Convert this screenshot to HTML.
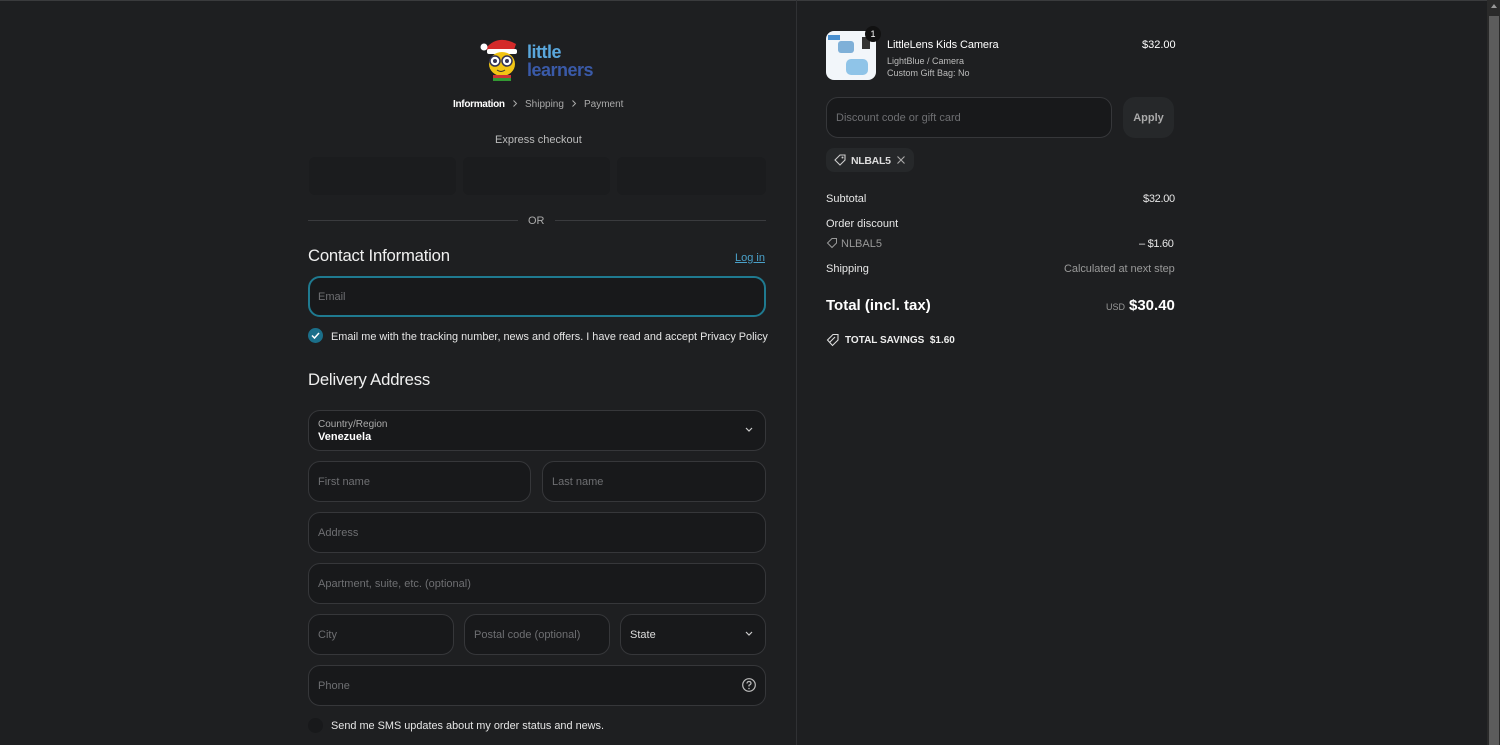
<!DOCTYPE html>
<html><head><meta charset="utf-8"><style>
*{box-sizing:border-box;margin:0;padding:0}
body{width:1500px;height:745px;overflow:hidden;background:#1e1f21;font-family:"Liberation Sans",sans-serif;color:#e8e8e8;position:relative}
.a{position:absolute}
.inp{position:absolute;border:1px solid #36373a;border-radius:12px;background:#18191b;font-size:11px;color:#6e6f72;padding-left:9px;padding-top:1px;display:flex;align-items:center}
.t{font-size:11px;color:#e6e6e6}
</style></head><body>
<div class="a" style="left:0;top:0;width:1500px;height:1px;background:#3a3b3d"></div>
<div class="a" style="left:796px;top:0;width:1px;height:745px;background:#303134"></div>
<div class="a" style="left:1487px;top:0;width:13px;height:745px;background:#2a2a2a"></div>
<div class="a" style="left:1489px;top:16px;width:10px;height:729px;background:#5c5c5c"></div>
<div class="a" style="left:1491px;top:4px;width:0;height:0;border-left:3px solid transparent;border-right:3px solid transparent;border-bottom:4px solid #999"></div>

<svg class="a" style="left:478px;top:34px" width="50" height="50" viewBox="0 0 50 50">
<path d="M8 14 Q20 0 38 10 L36 16 L10 18Z" fill="#d42a2a"/>
<circle cx="6" cy="13" r="3.5" fill="#fff"/>
<rect x="9" y="15" width="30" height="5" rx="2" fill="#fff"/>
<ellipse cx="24" cy="30" rx="13" ry="12" fill="#f2c514"/>
<circle cx="17" cy="27" r="5" fill="#fff" stroke="#335" stroke-width="1.5"/>
<circle cx="29" cy="27" r="5" fill="#fff" stroke="#335" stroke-width="1.5"/>
<circle cx="17" cy="27" r="2" fill="#335"/><circle cx="29" cy="27" r="2" fill="#335"/>
<path d="M19 36 Q23 39 27 36" stroke="#333" fill="none"/>
<rect x="15" y="41" width="18" height="3" fill="#c33"/><rect x="15" y="44" width="18" height="3" fill="#393"/>
</svg>
<div class="a" style="left:527px;top:42px;font-size:18px;font-weight:bold;color:#5aa7dc;letter-spacing:-0.5px">little</div>
<div class="a" style="left:527px;top:60px;font-size:18px;font-weight:bold;color:#3a5aa8;letter-spacing:-0.5px">learners</div>

<div class="a" style="left:453px;top:99px;font-size:10px;color:#fff;font-weight:bold;letter-spacing:-0.3px">Information</div>
<svg class="a" style="left:511px;top:99px" width="8" height="9"><path d="M2.5 1.5 L5.5 4.5 L2.5 7.5" stroke="#aaa" fill="none"/></svg>
<div class="a" style="left:525px;top:99px;font-size:10px;color:#aaa">Shipping</div>
<svg class="a" style="left:570px;top:99px" width="8" height="9"><path d="M2.5 1.5 L5.5 4.5 L2.5 7.5" stroke="#aaa" fill="none"/></svg>
<div class="a" style="left:584px;top:99px;font-size:10px;color:#aaa">Payment</div>
<div class="a" style="left:495px;top:134px;font-size:11px;color:#bbb">Express checkout</div>
<div class="a" style="left:309px;top:157px;width:147px;height:38px;border-radius:6px;background:#1b1c1e"></div>
<div class="a" style="left:463px;top:157px;width:147px;height:38px;border-radius:6px;background:#1b1c1e"></div>
<div class="a" style="left:617px;top:157px;width:149px;height:38px;border-radius:6px;background:#1b1c1e"></div>
<div class="a" style="left:308px;top:220px;width:210px;height:1px;background:#3a3b3e"></div>
<div class="a" style="left:555px;top:220px;width:211px;height:1px;background:#3a3b3e"></div>
<div class="a" style="left:528px;top:215px;font-size:11px;color:#aaa">OR</div>

<div class="a" style="left:308px;top:246px;font-size:16.7px;color:#f0f0f0;letter-spacing:-0.2px">Contact Information</div>
<div class="a" style="left:735px;top:252px;font-size:11px;color:#4aa0c8;text-decoration:underline">Log in</div>
<div class="inp" style="left:308px;top:276px;width:458px;height:41px;border:2px solid #1f7a90;padding-left:8px">Email</div>
<div class="a" style="left:308px;top:328px;width:15px;height:15px;border-radius:50%;background:#1b6f8a"></div>
<svg class="a" style="left:308px;top:328px" width="15" height="15"><path d="M4 7.5 L6.5 10 L11 5" stroke="#fff" stroke-width="1.5" fill="none"/></svg>
<div class="a t" style="left:331px;top:331px;font-size:10.9px">Email me with the tracking number, news and offers. I have read and accept Privacy Policy</div>

<div class="a" style="left:308px;top:370px;font-size:16.7px;color:#f0f0f0;letter-spacing:-0.2px">Delivery Address</div>
<div class="inp" style="left:308px;top:410px;width:458px;height:41px;display:block;padding-top:8px">
<div style="font-size:10px;color:#aaa">Country/Region</div><div style="font-size:11px;color:#fff;font-weight:bold;margin-top:1px">Venezuela</div></div>
<svg class="a" style="left:744px;top:426px" width="10" height="8"><path d="M2 2 L5 5 L8 2" stroke="#ccc" stroke-width="1.2" fill="none"/></svg>
<div class="inp" style="left:308px;top:461px;width:223px;height:41px">First name</div>
<div class="inp" style="left:542px;top:461px;width:224px;height:41px">Last name</div>
<div class="inp" style="left:308px;top:512px;width:458px;height:41px">Address</div>
<div class="inp" style="left:308px;top:563px;width:458px;height:41px">Apartment, suite, etc. (optional)</div>
<div class="inp" style="left:308px;top:614px;width:146px;height:41px">City</div>
<div class="inp" style="left:464px;top:614px;width:146px;height:41px">Postal code (optional)</div>
<div class="inp" style="left:620px;top:614px;width:146px;height:41px;color:#ddd">State</div>
<svg class="a" style="left:744px;top:630px" width="10" height="8"><path d="M2 2 L5 5 L8 2" stroke="#ccc" stroke-width="1.2" fill="none"/></svg>
<div class="inp" style="left:308px;top:665px;width:458px;height:41px">Phone</div>
<svg class="a" style="left:741px;top:677px" width="16" height="16"><circle cx="8" cy="8" r="6.3" stroke="#bbb" stroke-width="1.2" fill="none"/><path d="M6 6.5 Q6 4.5 8 4.5 Q10 4.5 10 6.3 Q10 7.5 8 8.3 L8 9.5" stroke="#bbb" stroke-width="1.2" fill="none"/><circle cx="8" cy="11.5" r="0.8" fill="#bbb"/></svg>
<div class="a" style="left:308px;top:718px;width:15px;height:15px;border-radius:50%;background:#18191b"></div>
<div class="a t" style="left:331px;top:720px;font-size:10.9px">Send me SMS updates about my order status and news.</div>

<div class="a" style="left:826px;top:31px;width:50px;height:49px;border-radius:8px;background:#f2f6fa;overflow:hidden">
<div class="a" style="left:20px;top:28px;width:22px;height:16px;border-radius:5px;background:#8fc4e8"></div>
<div class="a" style="left:12px;top:10px;width:16px;height:12px;border-radius:3px;background:#7fb0d8"></div>
<div class="a" style="left:2px;top:4px;width:12px;height:5px;background:#4a90d0"></div>
<div class="a" style="left:36px;top:6px;width:8px;height:12px;background:#333"></div>
</div>
<div class="a" style="left:865px;top:26px;width:16px;height:16px;border-radius:50%;background:#111;font-size:9px;color:#fff;text-align:center;line-height:16px">1</div>
<div class="a" style="left:887px;top:39px;font-size:11px;color:#fff;letter-spacing:-0.1px">LittleLens Kids Camera</div>
<div class="a" style="left:887px;top:56px;font-size:9px;color:#bbb">LightBlue / Camera</div>
<div class="a" style="left:887px;top:68px;font-size:9px;color:#bbb">Custom Gift Bag: No</div>
<div class="a" style="left:1142px;top:39px;font-size:11px;color:#fff">$32.00</div>
<div class="inp" style="left:826px;top:97px;width:286px;height:41px">Discount code or gift card</div>
<div class="a" style="left:1123px;top:97px;width:51px;height:41px;border-radius:12px;background:#26282a;font-size:11px;font-weight:bold;color:#aaa;text-align:center;line-height:42px">Apply</div>
<div class="a" style="left:826px;top:148px;width:88px;height:24px;border-radius:8px;background:#26282a"></div>
<svg class="a" style="left:833px;top:153px" width="14" height="14"><path d="M2 7 L7 2 L12 2 L12 7 L7 12Z" stroke="#ccc" stroke-width="1.1" fill="none"/><circle cx="9.5" cy="4.5" r="1" fill="#ccc"/></svg>
<div class="a" style="left:851px;top:155px;font-size:10.5px;font-weight:bold;color:#ddd;letter-spacing:-0.3px">NLBAL5</div>
<svg class="a" style="left:896px;top:155px" width="10" height="10"><path d="M1.5 1.5 L8.5 8.5 M8.5 1.5 L1.5 8.5" stroke="#aaa" stroke-width="1.1"/></svg>

<div class="a t" style="left:826px;top:193px">Subtotal</div>
<div class="a t" style="left:1143px;top:193px;letter-spacing:-0.3px">$32.00</div>
<div class="a t" style="left:826px;top:218px">Order discount</div>
<svg class="a" style="left:826px;top:237px" width="12" height="12"><path d="M1.5 6 L6 1.5 L10.5 1.5 L10.5 6 L6 10.5Z" stroke="#999" fill="none"/></svg>
<div class="a" style="left:841px;top:238px;font-size:11px;color:#999">NLBAL5</div>
<div class="a t" style="left:1139px;top:238px;letter-spacing:-0.3px">– $1.60</div>
<div class="a t" style="left:826px;top:263px">Shipping</div>
<div class="a" style="left:1064px;top:263px;font-size:11px;color:#999;letter-spacing:-0.05px">Calculated at next step</div>
<div class="a" style="left:826px;top:297px;font-size:15px;font-weight:bold;color:#fff">Total (incl. tax)</div>
<div class="a" style="left:1106px;top:302px;font-size:9px;color:#999">USD</div>
<div class="a" style="left:1129px;top:297px;font-size:15px;font-weight:bold;color:#fff">$30.40</div>
<svg class="a" style="left:826px;top:333px" width="14" height="14"><path d="M1.5 7 L7 1.5 L12 1.5 L12 7 L6.5 12.5Z M4 9 L9 4" stroke="#ddd" stroke-width="1.1" fill="none"/></svg>
<div class="a" style="left:845px;top:335px;font-size:10px;font-weight:bold;color:#eee">TOTAL SAVINGS&nbsp;&nbsp;$1.60</div>
</body></html>
